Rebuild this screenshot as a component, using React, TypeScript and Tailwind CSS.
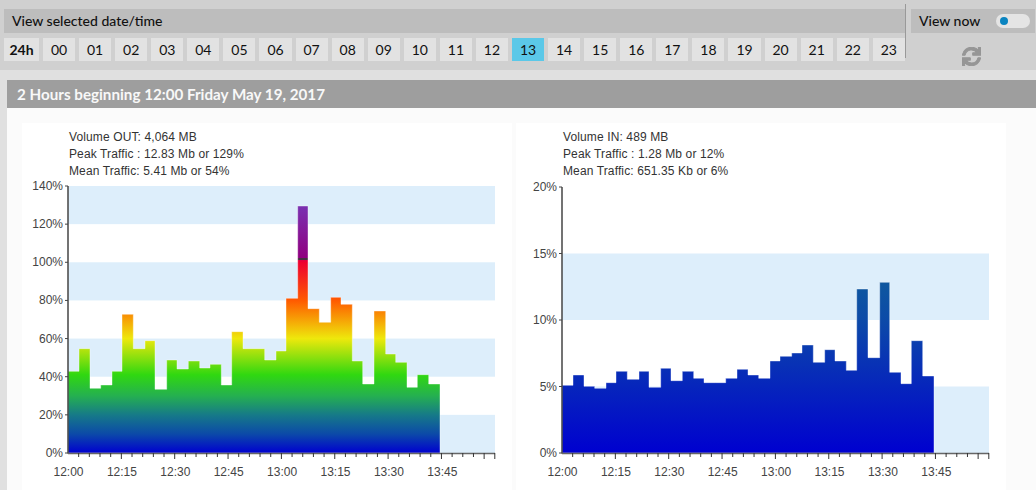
import { FaSync } from "react-icons/fa";

const hours = Array.from({ length: 24 }, (_, i) => String(i).padStart(2, "0"));
const edges = [68, 79, 90, 100.7, 112, 122, 133.3, 145, 155, 166.7, 177, 188.3, 199.7, 210, 221.3, 231.7, 243, 254, 264.7, 276, 286, 297.7, 308, 319.3, 330.7, 341, 352.3, 362.7, 374, 385.7, 395.7, 407, 417.3, 428.7, 440];
const outTops = [574, 506, 625, 615, 574, 403, 506, 482, 628, 540, 567, 543, 564, 553, 615, 455, 506, 506, 540, 513, 355, 78, 386, 427, 352, 373, 543, 612, 393, 522, 547, 622, 584, 612];
const inTops = [616, 585, 619, 625, 608, 574, 598, 574, 622, 565, 602, 574, 595, 608, 608, 595, 568, 585, 595, 543, 529, 519, 495, 547, 509, 543, 571, 327, 533, 307, 577, 611, 482, 588];
const BASE = 453;
const labels = ["12:00", "12:15", "12:30", "12:45", "13:00", "13:15", "13:30", "13:45"];

function barPath(tops: number[], dx: number) {
  let d = `M${edges[0] + dx} ${BASE}`;
  tops.forEach((z, i) => {
    const y = 180 + z / 3;
    d += `L${edges[i] + dx} ${y}L${edges[i + 1] + dx} ${y}`;
  });
  return d + `L${edges[edges.length - 1] + dx} ${BASE}Z`;
}

function Chart({
  id, dx, top, lines, tops, yLabels, bands, stops,
}: {
  id: string; dx: number; top: number; lines: string[]; tops: number[]; yLabels: string[];
  bands: number[]; stops: [number, string][];
}) {
  const step = (BASE - top) / (yLabels.length - 1);
  const left = 68 + dx;
  const right = 495 + dx;
  return (
    <div className="w-[490px] shrink-0 bg-white">
      <div className="h-[57px] pl-[47px] pt-[5.5px] font-['Liberation_Sans',sans-serif] text-[12px] leading-[17px] tracking-[0.12px] text-[#333]">
        {lines.map((l) => (
          <div key={l}>{l}</div>
        ))}
      </div>
      <svg width="490" height="310" viewBox={`${22 + dx} 180 490 310`} className="block">
        <defs>
          <linearGradient id={id} gradientUnits="userSpaceOnUse" x1="0" y1={BASE} x2="0" y2={top}>
            {stops.map(([o, c], i) => (
              <stop key={i} offset={o} stopColor={c} />
            ))}
          </linearGradient>
        </defs>
        {bands.map((b) => (
          <rect key={b} x={left} y={top + b * step} width={right - left} height={step} fill="#ddeefb" />
        ))}
        <path d={barPath(tops, dx)} fill={`url(#${id})`} stroke="#ffffff" strokeOpacity="0.4" strokeWidth="1" />
        <line x1={left} y1={top} x2={left} y2={BASE + 0.5} stroke="#444" strokeWidth="1.5" />
        <line x1={left} y1={BASE + 0.5} x2={right} y2={BASE + 0.5} stroke="#666" strokeWidth="1.5" />
        {yLabels.map((t, i) => (
          <g key={t}>
            <line x1={left - 3} y1={top + i * step} x2={left} y2={top + i * step} stroke="#444" />
            <text x={left - 5} y={top + i * step + 4} textAnchor="end" className="fill-[#444] font-['Liberation_Sans',sans-serif] text-[12px]">{t}</text>
          </g>
        ))}
        {Array.from({ length: 40 }, (_, i) => i + 1).map((i) => {
          const x = left + i * 10.67;
          const major = i % 5 === 0 || i === 39;
          return <line key={i} x1={x} y1={BASE} x2={x} y2={BASE + (major ? 6 : 4)} stroke="#333" />;
        })}
        {labels.map((t, i) => (
          <text key={t} x={left + i * 53.4 + 0.5} y={476} textAnchor="middle" className="fill-[#444] font-['Liberation_Sans',sans-serif] text-[12px]">{t}</text>
        ))}
      </svg>
    </div>
  );
}

const outStops: [number, string][] = [
  [0, "#0000d0"],
  [10 / 140, "#0c4aa8"],
  [20 / 140, "#167a88"],
  [30 / 140, "#25b050"],
  [41 / 140, "#30d810"],
  [60 / 140, "#eee80c"],
  [80 / 140, "#ff5a00"],
  [100 / 140, "#ee0030"],
  [101 / 140, "#e00040"],
  [101 / 140, "#443040"],
  [102.5 / 140, "#443040"],
  [102.5 / 140, "#900080"],
  [129 / 140, "#7a30b0"],
  [1, "#7a30b0"],
];
const inStops: [number, string][] = [
  [0, "#0000d0"],
  [10 / 20, "#0c4aa8"],
  [1, "#167a88"],
];

export default function App() {
  return (
    <div className="h-[490px] w-[1036px] overflow-hidden bg-[#e0e0e0] font-['Lato',sans-serif] text-[#111]">
      <div className="flex h-[70px] bg-[#d0d0d0]">
        <div className="ml-1 w-[901px] pt-[9px]">
          <div className="flex h-6 items-center bg-[#bdbdbd] pb-[2px] pl-2 text-[14px] font-medium">View selected date/time</div>
          <div className="mt-[5px] flex h-[23px] gap-1 text-[14px]">
            <div className="flex w-[35px] shrink-0 items-center justify-center bg-[#e2e2e2] font-bold">24h</div>
            {hours.map((h) => (
              <div key={h} className={`flex flex-1 items-center justify-center ${h === "13" ? "bg-[#5bc8e8]" : "bg-[#e2e2e2]"}`}>{h}</div>
            ))}
          </div>
        </div>
        <div className="mt-1 h-[54px] w-px bg-[#999]" />
        <div className="ml-[5px] w-[124px] pt-[5px]">
          <div className="mt-1 flex h-6 items-center justify-between bg-[#bdbdbd] pl-2 pr-[5px] text-[14px] font-medium">
            <span className="pb-[2px]">View now</span>
            <span className="flex h-[14px] w-[34px] items-center rounded-full bg-[#e4e4e4] pl-1">
              <span className="h-2 w-2 rounded-full bg-[#0a84c0]" />
            </span>
          </div>
          <div className="mt-[14px] flex justify-center pr-[4px]">
            <FaSync className="text-[#969696]" size={19} stroke="currentColor" strokeWidth={28} />
          </div>
        </div>
      </div>
      <div className="ml-[7px] mt-[10px] bg-[#fbfbfb]">
        <div className="flex h-7 items-center bg-[#9e9e9e] pl-[10px] text-[15.2px] font-bold text-[#f8f8f8]">2 Hours beginning 12:00 Friday May 19, 2017</div>
        <div className="flex h-[382px] gap-1 pl-[15px] pt-[15px]">
          <Chart
            id="gout"
            dx={0}
            top={186}
            lines={["Volume OUT: 4,064 MB", "Peak Traffic : 12.83 Mb or 129%", "Mean Traffic: 5.41 Mb or 54%"]}
            tops={outTops}
            yLabels={["140%", "120%", "100%", "80%", "60%", "40%", "20%", "0%"]}
            bands={[0, 2, 4, 6]}
            stops={outStops}
          />
          <Chart
            id="gin"
            dx={494}
            top={187}
            lines={["Volume IN: 489 MB", "Peak Traffic : 1.28 Mb or 12%", "Mean Traffic: 651.35 Kb or 6%"]}
            tops={inTops}
            yLabels={["20%", "15%", "10%", "5%", "0%"]}
            bands={[1, 3]}
            stops={inStops}
          />
        </div>
      </div>
    </div>
  );
}
